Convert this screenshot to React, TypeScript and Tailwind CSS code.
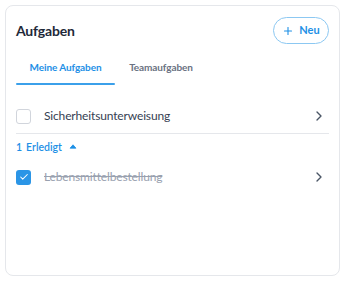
import React from 'react';
import { Plus, ChevronRight, Check } from 'lucide-react';

const App: React.FC = () => {
  return (
    <div className="w-[346px] h-[281px] bg-white p-[5px] pr-[6px] pb-[5px]" style={{ fontFamily: 'Lato, "Noto Sans", sans-serif' }}>
      <div className="flex flex-col h-[271px] rounded-lg border border-gray-200 bg-white px-[10px]">
        <div className="flex items-center justify-between pt-[11px]">
          <h2 className="text-[14px] font-bold text-gray-800 tracking-[-0.2px]">Aufgaben</h2>
          <button
            type="button"
            className="flex items-center gap-[5px] h-[27px] w-[56px] justify-center rounded-full border border-[#8cc8f2] text-[11px] font-bold text-[#1e90e6]"
          >
            <Plus className="h-3 w-3" strokeWidth={2.2} />
            Neu
          </button>
        </div>

        <div className="flex mt-[8px]">
          <div className="w-[99px] flex flex-col items-center">
            <span className="h-[31px] leading-[31px] text-[10px] font-bold text-[#1e90e6] tracking-[-0.1px]">Meine Aufgaben</span>
            <div className="h-[2px] w-full bg-[#3ba0ea] rounded-full" />
          </div>
          <div className="w-[92px] flex flex-col items-center">
            <span className="h-[31px] leading-[31px] text-[10px] font-bold text-gray-500 tracking-[-0.1px]">Teamaufgaben</span>
          </div>
        </div>

        <div className="mt-[15px] flex items-center h-[33px] pb-[1px]">
          <div className="h-[15px] w-[15px] rounded-[3px] border border-gray-300" />
          <span className="ml-[13px] text-[12px] text-gray-700 tracking-[-0.15px]">Sicherheitsunterweisung</span>
          <ChevronRight className="ml-auto mr-[2px] h-4 w-4 text-gray-600" strokeWidth={2} />
        </div>
        <div className="h-px bg-gray-200" />

        <div className="mt-[6px] flex items-center gap-[4px] text-[10.5px] text-[#1e90e6] font-semibold">
          <span>1</span>
          <span>Erledigt</span>
          <svg width="8" height="5" viewBox="0 0 9 6" className="ml-[3px] -mt-[2px]">
            <path d="M1 5 L4.5 1 L8 5 Z" fill="#1e90e6" stroke="#1e90e6" strokeLinejoin="round" />
          </svg>
        </div>

        <div className="mt-[9px] flex items-center h-[25px]">
          <div className="h-[15px] w-[15px] rounded-[3px] bg-[#2b95e6] flex items-center justify-center">
            <Check className="h-[10px] w-[10px] text-white" strokeWidth={2.5} />
          </div>
          <span className="ml-[13px] text-[12px] text-gray-400 line-through tracking-[-0.15px]">Lebensmittelbestellung</span>
          <ChevronRight className="ml-auto mr-[2px] h-4 w-4 text-gray-600" strokeWidth={2} />
        </div>
      </div>
    </div>
  );
};

export default App;
